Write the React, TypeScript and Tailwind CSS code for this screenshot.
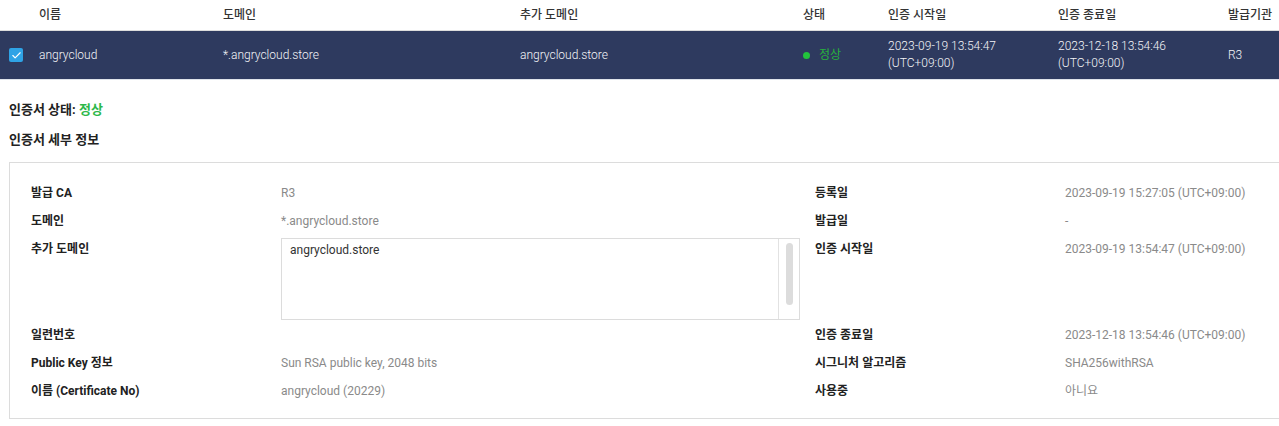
import { Check } from "lucide-react";

type Row = { label: string; value: string; rLabel: string; rValue: string };

const rows: Row[] = [
    { label: "발급 CA", value: "R3", rLabel: "등록일", rValue: "2023-09-19 15:27:05 (UTC+09:00)" },
    { label: "도메인", value: "*.angrycloud.store", rLabel: "발급일", rValue: "-" },
    { label: "추가 도메인", value: "", rLabel: "인증 시작일", rValue: "2023-09-19 13:54:47 (UTC+09:00)" },
    { label: "일련번호", value: "", rLabel: "인증 종료일", rValue: "2023-12-18 13:54:46 (UTC+09:00)" },
    { label: "Public Key 정보", value: "Sun RSA public key, 2048 bits", rLabel: "시그니처 알고리즘", rValue: "SHA256withRSA" },
    { label: "이름 (Certificate No)", value: "angrycloud (20229)", rLabel: "사용중", rValue: "아니요" },
];

const cols = "grid grid-cols-[39px_184px_297px_283px_85px_170px_170px_1fr]";

export default function App() {
    return (
        <main className="w-[1279px] h-[426px] overflow-hidden bg-white text-[12px] text-[#333] font-['Roboto','Noto_Sans_CJK_KR',sans-serif]">
            {/* Table */}
            <div className={`${cols} h-[31px] items-center border-b border-[#dcdcdc] font-medium text-[#333]`}>
                <div />
                <div>이름</div>
                <div>도메인</div>
                <div>추가 도메인</div>
                <div>상태</div>
                <div>인증 시작일</div>
                <div>인증 종료일</div>
                <div>발급기관</div>
            </div>
            <div className={`${cols} h-[49px] items-center bg-[#2e3a5f] border-b border-[#dfe3ea] text-[#f4f5f8] leading-[17px] font-light`}>
                <div className="pl-[9px]">
                    <div className="w-[14px] h-[14px] rounded-[2px] bg-[#2fa3e6] flex items-center justify-center">
                        <Check className="w-[11px] h-[11px] text-white" strokeWidth={2.5} />
                    </div>
                </div>
                <div>angrycloud</div>
                <div>*.angrycloud.store</div>
                <div>angrycloud.store</div>
                <div className="flex items-center gap-[9px]">
                    <span className="w-[7px] h-[7px] rounded-full bg-[#22c33c]" />
                    <span className="text-[#27b13d] font-normal">정상</span>
                </div>
                <div>2023-09-19 13:54:47<br />(UTC+09:00)</div>
                <div>2023-12-18 13:54:46<br />(UTC+09:00)</div>
                <div>R3</div>
            </div>

            {/* Detail */}
            <div className="pl-[9px]">
                <h2 className="mt-[20px] text-[13px] font-bold leading-[20px] text-[#222]">
                    인증서 상태: <span className="text-[#2db84a]">정상</span>
                </h2>
                <h2 className="mt-[10px] text-[13px] font-bold leading-[20px] text-[#222]">인증서 세부 정보</h2>

                <div className="mt-[12px] w-[1300px] h-[257px] border border-[#dcdcdc] pl-[21px] pt-[16px]">
                    <div className="grid grid-cols-[250px_534px_250px_1fr]">
                        {rows.map((r) => {
                            const tall = r.label === "추가 도메인";
                            const h = tall ? "h-[86px]" : "h-[28px]";
                            return (
                                <div key={r.label} className="contents">
                                    <div className={`${h} leading-[28px] font-bold text-[#222]`}>{r.label}</div>
                                    <div className={`${h} leading-[28px] text-[#8a8a8a]`}>
                                        {tall ? (
                                            <div className="mt-[3px] w-[519px] h-[82px] border border-[#dcdcdc] flex">
                                                <div className="flex-1 pl-[8px] pt-[3px] leading-[16px] text-[#333]">angrycloud.store</div>
                                                <div className="w-[21px] border-l border-[#e2e2e2] flex justify-center pt-[4px]">
                                                    <div className="w-[7px] h-[62px] rounded-full bg-[#dcdcdc]" />
                                                </div>
                                            </div>
                                        ) : r.value}
                                    </div>
                                    <div className={`${h} leading-[28px] font-bold text-[#222]`}>{r.rLabel}</div>
                                    <div className={`${h} leading-[28px] text-[#8a8a8a]`}>{r.rValue}</div>
                                </div>
                            );
                        })}
                    </div>
                </div>
            </div>
        </main>
    );
}
